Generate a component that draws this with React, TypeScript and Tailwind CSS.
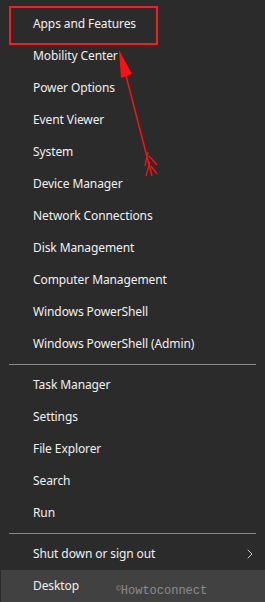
import { ChevronRight } from 'lucide-react';

const groupA = [
  'Apps and Features',
  'Mobility Center',
  'Power Options',
  'Event Viewer',
  'System',
  'Device Manager',
  'Network Connections',
  'Disk Management',
  'Computer Management',
  'Windows PowerShell',
  'Windows PowerShell (Admin)',
];

const groupB = ['Task Manager', 'Settings', 'File Explorer', 'Search', 'Run'];

function Item({ label }: { label: string }) {
  return (
    <div className="h-8 flex items-center pl-[33px] text-[12px] tracking-[-0.1px] text-[#f0f0f0]">
      {label}
    </div>
  );
}

function Divider() {
  return <div className="mx-[9px] h-px bg-[#8a8a8a] my-[4px]" />;
}

export default function App() {
  return (
    <div
      className="relative w-[265px] h-[602px] bg-[#2b2b2b] overflow-hidden"
      style={{ fontFamily: '"Noto Sans", "Open Sans", sans-serif' }}
    >
      <div className="pt-[8px]">
        {groupA.map((l) => (
          <Item key={l} label={l} />
        ))}
        <Divider />
        {groupB.map((l) => (
          <Item key={l} label={l} />
        ))}
        <Divider />
        <div className="h-8 flex items-center justify-between pl-[33px] pr-[7px] text-[12px] tracking-[-0.1px] text-[#f0f0f0]">
          <span>Shut down or sign out</span>
          <ChevronRight className="w-[16px] h-[16px] text-[#e6e6e6]" strokeWidth={1.3} />
        </div>
        <div className="ml-px h-8 flex items-center pl-[32px] text-[12px] tracking-[-0.1px] text-[#f0f0f0] bg-[#414141]">
          Desktop
        </div>
      </div>

      {/* annotation: red box */}
      <div className="absolute left-[9px] top-[6px] w-[149px] h-[39px] border-2 border-[#ff1a1a]" />

      {/* annotation: arrow */}
      <svg className="absolute left-0 top-0" width="265" height="602" viewBox="0 0 265 602">
        <line x1="124" y1="68" x2="152" y2="176" stroke="#ff1010" strokeWidth="1.5" />
        <polygon points="119,50 132,74 121,78" fill="#ff1010" />
        <g stroke="#ff1010" strokeWidth="1.3" fill="none">
          <path d="M148 152 L145 166" />
          <path d="M149 156 L157 165" />
          <path d="M150 162 L146 176" />
          <path d="M151 166 L157 174" />
        </g>
      </svg>

      {/* watermark */}
      <div
        className="absolute left-[116px] top-[585px] text-[12px] text-[#8c8c8c] leading-none"
        style={{ fontFamily: '"Liberation Mono", monospace' }}
      >
        <span className="text-[8px] align-top">©</span>Howtoconnect
      </div>
    </div>
  );
}
